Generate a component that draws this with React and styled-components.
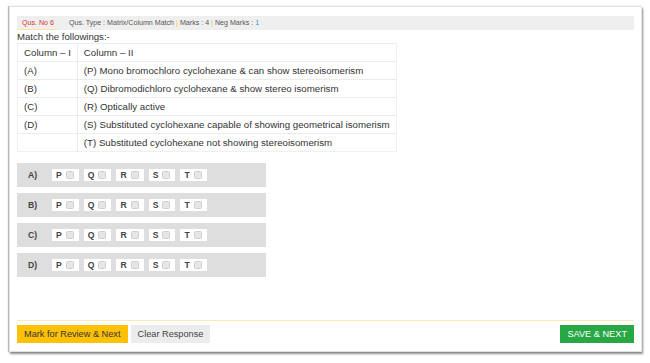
import React from "react";
import styled, { createGlobalStyle } from "styled-components";

const Global = createGlobalStyle`
  html, body { margin: 0; padding: 0; background: #ffffff; }
  body { font-family: "Liberation Sans", Arial, sans-serif; color: #333; }
`;

const Page = styled.div`
  width: 650px;
  height: 363px;
  padding: 6px 8px 0 9px;
  box-sizing: border-box;
`;

const Card = styled.div`
  height: 346px;
  box-sizing: border-box;
  background: #fff;
  border: 1px solid #e2e2e2;
  box-shadow: 1px 2px 2px rgba(0, 0, 0, 0.45), -1px 0 1px rgba(0, 0, 0, 0.25);
  padding: 9px 7px 8px 7px;
  display: flex;
  flex-direction: column;
  align-items: flex-start;
`;

const InfoBar = styled.div`
  align-self: stretch;
  height: 14px;
  background: #efefef;
  display: flex;
  align-items: stretch;
  font-size: 7.1px;
  color: #555;
`;

const QNo = styled.div`
  color: #d9302b;
  padding: 0 4px 0 5px;
  display: flex;
  align-items: center;
  border-bottom: 1.5px solid #fbe3a6;
  margin-right: 11px;
`;

const Meta = styled.div`
  display: flex;
  align-items: center;
  gap: 2px;
`;

const Sep = styled.span`
  color: #f0c040;
`;

const Neg = styled.span`
  color: #2aa1c0;
`;

const Prompt = styled.div`
  font-size: 9.6px;
  line-height: 12px;
  color: #333;
  padding-top: 1px;
`;

const Table = styled.table`
  border-collapse: collapse;
  font-size: 9.7px;
  color: #333;
  border: 1px solid #f0f0f0;
`;

const Cell = styled.td`
  height: 17px;
  padding: 0 6px;
  border-top: 1px solid #ececec;
  border-left: ${(p) => (p.$divider ? "1px solid #ececec" : "none")};
  white-space: nowrap;
  vertical-align: middle;
`;

const Options = styled.div`
  margin-top: 11px;
  display: flex;
  flex-direction: column;
  gap: 6px;
`;

const OptionRow = styled.div`
  width: 249px;
  height: 24px;
  background: #dedede;
  display: flex;
  align-items: center;
  padding-left: 11px;
  box-sizing: border-box;
`;

const RowLabel = styled.span`
  width: 24px;
  font-size: 8.6px;
  font-weight: bold;
  color: #444;
`;

const Choices = styled.div`
  display: flex;
  gap: 5px;
`;

const Choice = styled.label`
  height: 12px;
  background: #fff;
  display: flex;
  align-items: center;
  gap: 4px;
  padding: 0 5px 0 4px;
  font-size: 8.6px;
  font-weight: bold;
  color: #444;
`;

const Box = styled.span`
  width: 6px;
  height: 6px;
  border: 1px solid #cfcfcf;
  background: #e6e6e6;
  border-radius: 1.5px;
`;

const Footer = styled.div`
  align-self: stretch;
  margin-top: auto;
  border-top: 1.5px solid #fde9b5;
  padding-top: 4px;
  display: flex;
  align-items: center;
  gap: 3px;
`;

const Btn = styled.button`
  height: 18px;
  border: none;
  font-family: "Liberation Sans", Arial, sans-serif;
  font-size: 9.2px;
  padding: 0 7px;
  background: ${(p) => p.$bg};
  color: ${(p) => p.$fg};
  margin-left: ${(p) => (p.$push ? "auto" : "0")};
  cursor: pointer;
`;

const rows = [
  ["(A)", "(P) Mono bromochloro cyclohexane & can show stereoisomerism"],
  ["(B)", "(Q) Dibromodichloro cyclohexane & show stereo isomerism"],
  ["(C)", "(R) Optically active"],
  ["(D)", "(S) Substituted cyclohexane capable of showing geometrical isomerism"],
  ["", "(T) Substituted cyclohexane not showing stereoisomerism"],
];

export default function App() {
  return (
    <>
      <Global />
      <Page>
        <Card>
          <InfoBar>
            <QNo>Qus. No 6</QNo>
            <Meta>
              Qus. Type : Matrix/Column Match <Sep>|</Sep> Marks : 4 <Sep>|</Sep> Neg Marks : <Neg>1</Neg>
            </Meta>
          </InfoBar>
          <Prompt>Match the followings:-</Prompt>
          <Table>
            <tbody>
              <tr>
                <Cell>Column – I</Cell>
                <Cell $divider>Column – II</Cell>
              </tr>
              {rows.map(([a, b], i) => (
                <tr key={i}>
                  <Cell>{a}</Cell>
                  <Cell $divider>{b}</Cell>
                </tr>
              ))}
            </tbody>
          </Table>
          <Options>
            {["A)", "B)", "C)", "D)"].map((r) => (
              <OptionRow key={r}>
                <RowLabel>{r}</RowLabel>
                <Choices>
                  {["P", "Q", "R", "S", "T"].map((c) => (
                    <Choice key={c}>
                      {c}
                      <Box />
                    </Choice>
                  ))}
                </Choices>
              </OptionRow>
            ))}
          </Options>
          <Footer>
            <Btn $bg="#ffc107" $fg="#333">Mark for Review &amp; Next</Btn>
            <Btn $bg="#ececec" $fg="#444">Clear Response</Btn>
            <Btn $bg="#28a745" $fg="#fff" $push>SAVE &amp; NEXT</Btn>
          </Footer>
        </Card>
      </Page>
    </>
  );
}
